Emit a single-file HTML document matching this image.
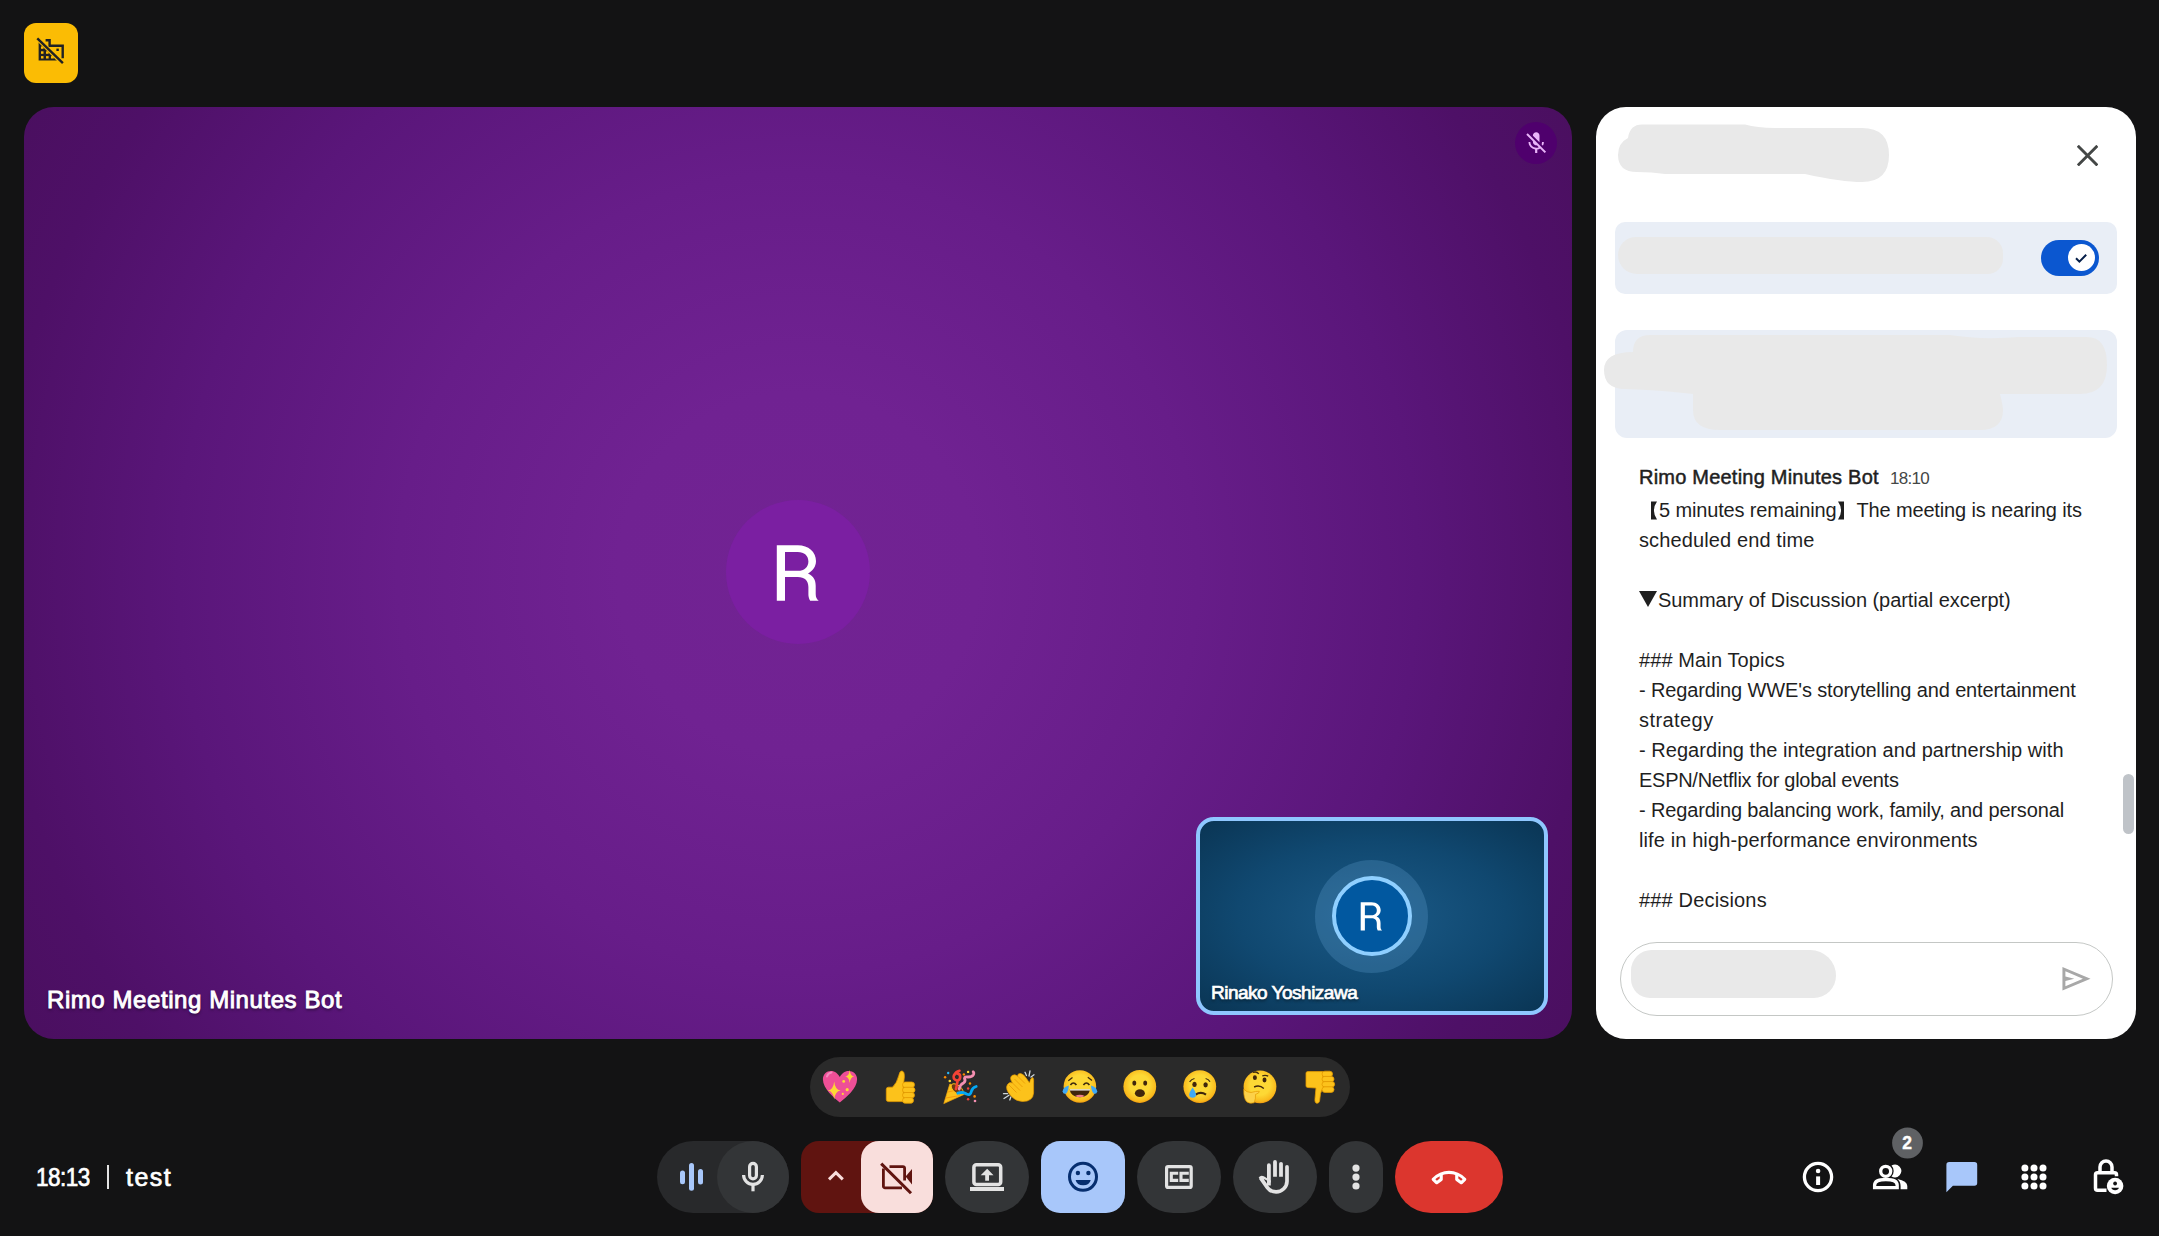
<!DOCTYPE html>
<html><head><meta charset="utf-8">
<style>
*{margin:0;padding:0;box-sizing:border-box}
html,body{width:2159px;height:1236px;overflow:hidden;background:#131314;font-family:"Liberation Sans",sans-serif}
.abs{position:absolute}
#badge{left:24px;top:23px;width:54px;height:60px;border-radius:12px;background:#fbbc04}
#main{left:24px;top:107px;width:1548px;height:932px;border-radius:30px;overflow:hidden;
 background:radial-gradient(circle at 50% 50%,#722393 0px,#702292 180px,#671d89 400px,#5a167a 620px,#4e1067 800px,#4a0f5f 910px)}
#panel{left:1596px;top:107px;width:540px;height:932px;border-radius:30px;background:#fff;overflow:hidden}
.blob{position:absolute;background:#e9e9e9}
.msg{position:absolute;left:43px;color:#1f1f1f;font-size:20px;line-height:30px;white-space:pre}
.br{display:inline-block;vertical-align:-3px}
.tri{display:inline-block;vertical-align:-1px}
.btn{position:absolute;top:1141px;height:72px;border-radius:36px;background:#333537}
</style></head><body>
<div id="badge" class="abs"></div>
<svg class="abs" style="left:0;top:0" width="100" height="100" viewBox="0 0 100 100">
 <path d="M38.6 39.6V60.5H60Z" fill="#202124"/>
 <g fill="#fbbc04"><rect x="41" y="46.4" width="2.5" height="2.4"/><rect x="41" y="51.3" width="2.5" height="2.5"/><rect x="46" y="51.3" width="2.6" height="2.5"/><rect x="41" y="56.1" width="2.5" height="2.4"/><rect x="46" y="56.1" width="2.6" height="2.4"/><rect x="51" y="56.1" width="2.8" height="2.4"/></g>
 <path d="M45.6 40.3H49.6V45.7H62.7V58.2" fill="none" stroke="#202124" stroke-width="2.4"/>
 <rect x="56.4" y="48.6" width="2.4" height="2.4" fill="#202124"/>
 <path d="M36.4 37.4L63.1 64.1" stroke="#fbbc04" stroke-width="4.2"/>
 <path d="M37.3 38.3L62.9 63.2" stroke="#202124" stroke-width="2.4"/>
</svg>
<div id="main" class="abs">
  <div class="abs" style="left:1491px;top:15px;width:42px;height:42px;border-radius:50%;background:#4f006d"></div>
  <svg class="abs" style="left:1499.2px;top:22.8px" width="26.4" height="26.4" viewBox="0 0 24 24"><path fill="#e9b5f9" d="M19 11h-1.7c0 .74-.16 1.43-.43 2.05l1.23 1.23c.56-.98.9-2.09.9-3.28zm-4.02.17c0-.06.02-.11.02-.17V5c0-1.66-1.34-3-3-3S9 3.34 9 5v.18l5.98 5.99zM4.27 3L3 4.27l6.01 6.01V11c0 1.66 1.33 3 2.99 3 .22 0 .44-.03.65-.08l1.66 1.66c-.71.33-1.5.52-2.31.52-2.76 0-5.3-2.1-5.3-5.1H5c0 3.41 2.72 6.23 6 6.72V21h2v-3.28c.91-.13 1.77-.45 2.54-.9L19.73 21 21 19.730 4.27 3z"/></svg>
  <div class="abs" style="left:702px;top:393px;width:144px;height:144px;border-radius:50%;background:#7b1fa2;color:#fff;font-size:81px;text-align:center;line-height:144px"></div>
  <div class="abs" style="left:23px;top:879px;color:#fff;font-size:24px;line-height:28px;-webkit-text-stroke:0.9px #fff;letter-spacing:0.57px;text-shadow:0 1.5px 3px rgba(0,0,0,.5)">Rimo Meeting Minutes Bot</div>
  <div class="abs" style="left:1172px;top:710px;width:352px;height:198px;border-radius:18px;border:4px solid #8fc7ff;background:radial-gradient(ellipse at 50% 50%,#1b5a87 0%,#104870 55%,#0a3554 100%)"></div>
  <div class="abs" style="left:1291.3px;top:752.5px;width:113px;height:113px;border-radius:50%;background:rgba(120,180,230,.22)"></div>
  <div class="abs" style="left:1307.8px;top:768.8px;width:80.5px;height:80.5px;border-radius:50%;background:#0158a0;border:4px solid #8fcfff;color:#fff;font-size:41px;line-height:72.5px;text-align:center"></div>
  <div class="abs" style="left:1187px;top:874px;color:#fff;font-size:19px;line-height:24px;-webkit-text-stroke:0.7px #fff;letter-spacing:-0.5px;text-shadow:0 1.5px 3px rgba(0,0,0,.5)">Rinako Yoshizawa</div>
</div>
<svg class="abs" style="left:0;top:0" width="1600" height="1050" viewBox="0 0 1600 1050">
 <path transform="translate(776.8 545.3)" fill="#fff" fill-rule="evenodd" d="M0 0H21C31.7 0 39.2 6.7 39.2 15.8C39.2 21.7 35.7 26 31.2 28.2C36.7 30.7 38.9 34.7 38.9 40.7V48.7C38.9 51.7 39.9 54.2 41.9 55.5H33.4C32.1 53.4 31.6 51.2 31.6 49.2V41.7C31.6 35.2 27.7 31.6 21 31.6H8.2V55.5H0ZM8.2 6.7V25.5H21C27.5 25.5 31.6 21.7 31.6 16.1C31.6 10.5 27.5 6.7 21 6.7Z"/>
 <path transform="translate(1360.7 902.2) scale(0.51)" fill="#fff" fill-rule="evenodd" d="M0 0H21C31.7 0 39.2 6.7 39.2 15.8C39.2 21.7 35.7 26 31.2 28.2C36.7 30.7 38.9 34.7 38.9 40.7V48.7C38.9 51.7 39.9 54.2 41.9 55.5H33.4C32.1 53.4 31.6 51.2 31.6 49.2V41.7C31.6 35.2 27.7 31.6 21 31.6H8.2V55.5H0ZM8.2 6.7V25.5H21C27.5 25.5 31.6 21.7 31.6 16.1C31.6 10.5 27.5 6.7 21 6.7Z"/>
</svg>
<div id="panel" class="abs">
  <svg class="abs" style="left:0;top:0" width="540" height="340" viewBox="1596 107 540 340"><g fill="#e9e9e9"><path d="M1642 124.6H1745Q1757 128 1775 128H1862Q1889 128 1889 155Q1889 182 1862 182Q1842 182 1805 174H1665Q1652 172 1637 172Q1618 172 1618 155Q1618 143 1628 138Q1630 124.6 1642 124.6Z"/></g></svg>
  <svg class="abs" style="left:480.5px;top:38.3px" width="21.2" height="21.2" viewBox="0 0 21.2 21.2"><path d="M0.8 0.8L20.4 20.4M20.4 0.8L0.8 20.4" stroke="#444746" stroke-width="2.9" fill="none"/></svg>
  <div class="abs" style="left:19px;top:115px;width:502px;height:72px;border-radius:10px;background:#e9eef6"></div>
  <div class="blob" style="left:22px;top:129.5px;width:385px;height:37px;border-radius:19px 17px 16px 20px"></div>
  <div class="abs" style="left:445px;top:133px;width:58px;height:36px;border-radius:18px;background:#0b57d0"></div>
  <div class="abs" style="left:471.5px;top:137px;width:27px;height:27px;border-radius:50%;background:#fff"></div>
  <svg class="abs" style="left:475px;top:140.5px" width="20" height="20" viewBox="0 0 20 20"><path d="M5 10.2L8.4 13.6L15.2 6.8" fill="none" stroke="#041e49" stroke-width="2"/></svg>
  <div class="abs" style="left:19px;top:223px;width:502px;height:108px;border-radius:12px;background:#e9eef6"></div>
  <svg class="abs" style="left:0;top:0" width="540" height="340" viewBox="1596 107 540 340"><g fill="#e9e9e9"><path d="M1650 335H1950Q1980 340 2020 337H2087Q2107 337 2107 365Q2107 394 2080 394H2000Q2003 406 2003 410Q2003 430 1980 430H1720Q1693 430 1693 410V394Q1660 390 1625 389Q1604 389 1604 370Q1604 352 1633 352Q1633 335 1650 335Z"/></g></svg>
  <div class="msg" style="top:355px;letter-spacing:0.217px"><span style="-webkit-text-stroke:0.5px #1f1f1f">Rimo Meeting Minutes Bot</span></div>
  <div class="msg" style="top:357px;left:294px;font-size:17px;color:#444746;letter-spacing:-0.7px">18:10</div>
  <div class="msg" style="top:388px;letter-spacing:-0.141px"><svg class="br" width="20" height="19" viewBox="0 0 20 19"><path d="M12 0.5H18Q14.8 5 15 9.5Q14.8 14 18 18.5H12Z" fill="#1f1f1f"/></svg>5 minutes remaining<svg class="br" width="20" height="19" viewBox="0 0 20 19"><path d="M8 0.5H2Q5.2 5 5 9.5Q5.2 14 2 18.5H8Z" fill="#1f1f1f"/></svg>The meeting is nearing its</div>
  <div class="msg" style="top:418px;letter-spacing:0.118px">scheduled end time</div>
  <div class="msg" style="top:478px;letter-spacing:-0.051px"><svg class="tri" width="19" height="17" viewBox="0 0 19 17"><path d="M0 0H18L9 16Z" fill="#1f1f1f"/></svg>Summary of Discussion (partial excerpt)</div>
  <div class="msg" style="top:538px;letter-spacing:0.107px">### Main Topics</div>
  <div class="msg" style="top:568px;letter-spacing:-0.128px">- Regarding WWE's storytelling and entertainment</div>
  <div class="msg" style="top:598px;letter-spacing:0.429px">strategy</div>
  <div class="msg" style="top:628px;letter-spacing:0.043px">- Regarding the integration and partnership with</div>
  <div class="msg" style="top:658px;letter-spacing:-0.276px">ESPN/Netflix for global events</div>
  <div class="msg" style="top:688px;letter-spacing:-0.149px">- Regarding balancing work, family, and personal</div>
  <div class="msg" style="top:718px;letter-spacing:0.111px">life in high-performance environments</div>
  <div class="msg" style="top:778px;letter-spacing:0.167px">### Decisions</div>
  <div class="abs" style="left:24px;top:835px;width:493px;height:74px;border-radius:37px;border:1.5px solid #c4c7c5"></div>
  <div class="abs" style="left:527px;top:667px;width:11px;height:60px;border-radius:6px;background:#bfc3c8"></div>
  <div class="blob" style="left:35px;top:843px;width:205px;height:48px;border-radius:24px 30px 26px 22px"></div>
  <svg class="abs" style="left:462px;top:854.1px" width="35.5" height="35.5" viewBox="0 0 24 24"><path fill-rule="evenodd" fill="#a8a8a8" d="M3 20V4l19 8Zm2-3 11.85-5L5 7v3.5l6 1.5-6 1.5Z"/></svg>
</div>
<div class="abs" style="left:810px;top:1057px;width:540px;height:60px;border-radius:30px;background:#2a2a2a"></div>
<!-- bottom bar -->
<div class="abs" style="left:657px;top:1141px;width:132px;height:72px;border-radius:36px;background:#28292b"></div>
<div class="abs" style="left:717px;top:1141px;width:72px;height:72px;border-radius:36px;background:#333537"></div>
<svg class="abs" style="left:0;top:0" width="2159" height="1236" viewBox="0 0 2159 1236">
 <g fill="#a8c7fa"><rect x="680" y="1170.4" width="5" height="13.8" rx="2.5"/><rect x="689" y="1163" width="5" height="27.7" rx="2.5"/><rect x="698" y="1169" width="5" height="15.6" rx="2.5"/></g>
 <g fill="none" stroke="#e3e3e3" stroke-width="3.2"><rect x="749.6" y="1163.3" width="6.8" height="15.6" rx="3.4"/><path d="M743.6 1175a9.4 9.4 0 0 0 18.8 0"/><path d="M753 1184.5V1191.3"/></g>
</svg>
<div class="abs" style="left:801px;top:1141px;width:132px;height:72px;border-radius:18px;background:#601410"></div>
<div class="abs" style="left:861px;top:1141px;width:72px;height:72px;border-radius:18px;background:#f9dedc"></div>
<div class="abs" style="left:945px;top:1141px;width:84px;height:72px;border-radius:36px;background:#333537"></div>
<div class="abs" style="left:1041px;top:1141px;width:84px;height:72px;border-radius:19px;background:#a8c7fa"></div>
<div class="abs" style="left:1137px;top:1141px;width:84px;height:72px;border-radius:36px;background:#333537"></div>
<div class="abs" style="left:1233px;top:1141px;width:84px;height:72px;border-radius:36px;background:#333537"></div>
<div class="abs" style="left:1329px;top:1141px;width:54px;height:72px;border-radius:27px;background:#333537"></div>
<div class="abs" style="left:1395px;top:1141px;width:108px;height:72px;border-radius:36px;background:#dc362e"></div>
<svg class="abs" style="left:0;top:0" width="2159" height="1236" viewBox="0 0 2159 1236">
 <path d="M829 1179.3L835.9 1172.6L842.8 1179.3" fill="none" stroke="#f9dedc" stroke-width="3"/>
 <g fill="none" stroke="#601410" stroke-width="2.8">
  <path d="M883.4 1168.5V1186.2a1.6 1.6 0 0 0 1.6 1.6H902"/>
  <path d="M889.5 1166.6H903a1.6 1.6 0 0 1 1.6 1.6V1180.5"/>
  <path d="M881.2 1163.6L911 1193.2" stroke-width="3"/>
 </g>
 <path d="M905.6 1176.6L912 1169V1184.5Z" fill="#601410"/>
 <g fill="none" stroke="#e3e3e3">
  <rect x="973.9" y="1164.8" width="26.8" height="19.6" rx="2.5" stroke-width="3.5"/>
 </g>
 <rect x="970" y="1187" width="34" height="4" fill="#e3e3e3"/>
 <path d="M987.2 1168.8L980.7 1175.2H985.2V1180.8H989V1175.2H993.5Z" fill="#e3e3e3"/>
 <g fill="none" stroke="#062e6f" stroke-width="3"><circle cx="1083" cy="1176.8" r="13.5"/></g>
 <g fill="#062e6f"><circle cx="1077.9" cy="1173" r="2.2"/><circle cx="1088.4" cy="1173" r="2.2"/><path d="M1075.6 1180H1090.7Q1089.5 1185.3 1083.15 1185.3Q1076.8 1185.3 1075.6 1180Z"/></g>
 <g fill="none" stroke="#e3e3e3" stroke-width="3.2"><rect x="1166.6" y="1166.6" width="24.6" height="20.8" rx="1.5"/></g>
 <g fill="none" stroke="#e3e3e3" stroke-width="3.1"><path d="M1178.2 1173.3H1171.3V1180.4H1178.2"/><path d="M1188.8 1173.3H1181V1180.4H1188.8"/></g>
 <g fill="#e3e3e3">
  <path d="M1267 1185.5V1165.2a1.9 1.9 0 0 1 3.8 0V1185.5Z"/>
  <path d="M1273.1 1176.7V1162a1.9 1.9 0 0 1 3.8 0V1176.7Z"/>
  <path d="M1279.1 1176.7V1163.8a1.9 1.9 0 0 1 3.8 0V1176.7Z"/>
  <path d="M1258.6 1177.4Q1260.8 1174.8 1263.8 1176.2L1270.8 1180.4V1182.8L1264.5 1179.2L1262.6 1180.6Z"/>
 </g>
 <path d="M1287 1167V1181.2A10.9 10.9 0 0 1 1276.1 1191.9Q1270.5 1191.9 1267.4 1187.6L1260.4 1177.6" fill="none" stroke="#e3e3e3" stroke-width="3.7" stroke-linejoin="round"/>
 <path d="M1285.1 1167a1.9 1.9 0 0 1 3.8 0Z" fill="#e3e3e3"/>
 <g fill="#e3e3e3"><circle cx="1356" cy="1168.1" r="3.6"/><circle cx="1356" cy="1177.1" r="3.6"/><circle cx="1356" cy="1186" r="3.6"/></g>
 <path transform="translate(1430.4 1195.66) scale(0.03873)" fill="#fff" d="m136-304-92-90q-12-12-12-29t12-29q88-95 203-142.5T480-642q118 0 232.5 47.5T916-452q12 12 12 29t-12 29l-92 90q-11 11-25.5 12t-26.5-8l-116-88q-8-6-12-14t-4-18v-114q-38-12-78-19t-82-7q-42 0-82 7t-78 19v114q0 10-4 18t-12 14l-116 88q-12 9-26.5 8T136-304Zm104-198q-29 15-56 34.5T128-424l40 40 72-56v-62Zm480 2v60l72 56 40-38q-29-26-56-45.5T720-500Z"/>
 <!-- right icons -->
 <g fill="none" stroke="#fff" stroke-width="3.3"><circle cx="1818" cy="1177" r="13.6"/></g>
 <circle cx="1818.1" cy="1171" r="2.3" fill="#fff"/><rect x="1816.1" y="1176.4" width="4" height="8.6" fill="#fff"/>
 <circle cx="1907.5" cy="1143" r="15.4" fill="#5f6164"/>
 <text x="1907.2" y="1149.3" fill="#fff" font-family="Liberation Sans" font-weight="bold" font-size="17.5" text-anchor="middle" stroke="#fff" stroke-width="0.4">2</text>
 <g fill="none" stroke="#fff" stroke-width="3.3">
  <circle cx="1885.7" cy="1171.3" r="5"/>
  <path d="M1874.6 1187.7V1185.2Q1874.6 1179.5 1885.9 1179.5Q1897.2 1179.5 1897.2 1185.2V1187.7Z"/>
 </g>
 <path d="M1891.5 1165.5A6.4 6.4 0 1 1 1891.5 1176.5A8 8 0 0 0 1891.5 1165.5Z" fill="#fff"/>
 <path d="M1897.4 1178.9Q1907.3 1180.8 1907.3 1186V1189.3H1900.6V1186Q1900.6 1181.5 1897.4 1178.9Z" fill="#fff"/>
 <path d="M1946.4 1164.9a2.8 2.8 0 0 1 2.8 -2.8H1974.4a2.8 2.8 0 0 1 2.8 2.8V1183a2.8 2.8 0 0 1 -2.8 2.8H1952.9L1946.4 1192.3Z" fill="#a8c7fa"/>
 <g fill="#fff">
  <circle cx="2024.9" cy="1167.9" r="3.5"/><circle cx="2034" cy="1167.9" r="3.5"/><circle cx="2043" cy="1167.9" r="3.5"/>
  <circle cx="2024.9" cy="1176.9" r="3.5"/><circle cx="2034" cy="1176.9" r="3.5"/><circle cx="2043" cy="1176.9" r="3.5"/>
  <circle cx="2024.9" cy="1186" r="3.5"/><circle cx="2034" cy="1186" r="3.5"/><circle cx="2043" cy="1186" r="3.5"/>
 </g>
 <g fill="none" stroke="#fff" stroke-width="3.5">
  <path d="M2100 1171.5V1167a6 6 0 0 1 12 0V1171.5"/>
  <path d="M2106.5 1190.2H2097.5a2 2 0 0 1 -2 -2V1174.7a2 2 0 0 1 2 -2H2114.5a2 2 0 0 1 2 2V1176.3"/>
 </g>
 <circle cx="2115.1" cy="1186" r="8.3" fill="#fff"/>
 <circle cx="2115.1" cy="1183.5" r="1.9" fill="#131314"/>
 <path d="M2111.3 1187.8H2118.9Q2118.3 1190.2 2115.1 1190.2Q2111.9 1190.2 2111.3 1187.8Z" fill="#131314"/>
</svg>
<svg class="abs" style="left:0;top:0" width="2159" height="1236" viewBox="0 0 2159 1236">
 <defs>
  <radialGradient id="fg" cx="0.5" cy="0.45" r="0.55"><stop offset="0.55" stop-color="#fdd835"/><stop offset="0.9" stop-color="#f9b91c"/><stop offset="1" stop-color="#f19b10"/></radialGradient>
  <radialGradient id="hg" cx="0.5" cy="0.5" r="0.6"><stop offset="0.6" stop-color="#fcc52a"/><stop offset="1" stop-color="#f2a516"/></radialGradient>
 </defs>
 <!-- sparkling heart -->
 <path d="M839.8 1102.4C834 1097.5 822.9 1089 822.9 1079.2C822.9 1074.2 826.5 1070.9 831 1070.9C835 1070.9 838 1073.5 839.8 1077C841.6 1073.5 844.6 1070.9 848.6 1070.9C853.4 1070.9 857.1 1074.2 857.1 1079.2C857.1 1089 845.6 1097.5 839.8 1102.4Z" fill="#ee4f97"/>
 <path d="M827 1076.5Q828 1073 831.5 1072.5" stroke="#f48bbf" stroke-width="2" fill="none" stroke-linecap="round"/>
 <g fill="#fdd835">
  <path d="M834.2 1081.4Q835 1089.6 840.6 1090.4Q835 1091.2 834.2 1099.4Q833.4 1091.2 827.8 1090.4Q833.4 1089.6 834.2 1081.4Z"/>
  <path d="M849.7 1070Q850.3 1076 854.2 1076.5Q850.3 1077 849.7 1083Q849.1 1077 845.2 1076.5Q849.1 1076 849.7 1070Z"/>
  <circle cx="843.7" cy="1081.4" r="1.4"/><circle cx="847.2" cy="1089.7" r="1.6"/><circle cx="842.8" cy="1093.9" r="1.1"/>
 </g>
 <!-- thumbs up -->
 <path d="M886.3 1089.3Q886.3 1087.2 888.5 1087.2H892.5Q897 1083 898.8 1075.5Q899.6 1071 901.8 1071Q904.6 1071.2 904.3 1077Q904 1081.5 903.2 1085.5L903.6 1101.6H888.5Q886.3 1101.6 886.3 1099.5Z" fill="#fcc21b" stroke="#e59b00" stroke-width="0.8"/>
 <g fill="#fcc21b" stroke="#e59b00" stroke-width="0.8">
  <rect x="902.5" y="1082" width="12" height="5.6" rx="2.8"/>
  <rect x="902.5" y="1087.3" width="12.5" height="5.4" rx="2.7"/>
  <rect x="902.5" y="1092.5" width="12" height="5.4" rx="2.7"/>
  <rect x="902.5" y="1097.6" width="11" height="5.6" rx="2.8"/>
 </g>
 <!-- party popper -->
 <path d="M943.8 1103.6L949.8 1084Q957.5 1085 964.5 1094.2Z" fill="#fcc21b" stroke="#f0a30a" stroke-width="0.7"/>
 <path d="M946 1098L960 1095.5M948 1092L956.5 1090" stroke="#f79a0a" stroke-width="1" fill="none"/>
 <ellipse cx="957.2" cy="1089.2" rx="7.2" ry="3.8" transform="rotate(40 957.2 1089.2)" fill="#6d3a12" stroke="#fcc21b" stroke-width="0.9"/>
 <path d="M956 1089Q957.2 1084 957.6 1080.5Q953.5 1080 953.6 1076.6Q953.8 1073.2 957 1073.4Q960.4 1073.8 960.2 1077.2Q960 1080 957.6 1080.5M954.5 1075Q955.5 1071.5 959.5 1070.8" stroke="#f44336" stroke-width="2.6" fill="none" stroke-linecap="round"/>
 <path d="M959.2 1089Q960 1084.5 963.5 1083Q966 1081 964.5 1078.5Q964.5 1076.5 968 1077Q972.5 1077 973.5 1074.5Q974.2 1072.5 973.2 1071.8" stroke="#f48fb1" stroke-width="2.8" fill="none" stroke-linecap="round"/>
 <path d="M957.8 1093.2Q963 1091.5 966.5 1094Q970.5 1096 971.5 1091Q972.5 1087.5 976.2 1086.5" stroke="#03a9f4" stroke-width="2.8" fill="none" stroke-linecap="round"/>
 <g><circle cx="948.2" cy="1073" r="1.2" fill="#29b6f6"/><circle cx="945.1" cy="1077.2" r="1.2" fill="#fb8c00"/><circle cx="949.8" cy="1081" r="1.3" fill="#fdd835"/><circle cx="963.9" cy="1074.4" r="1.2" fill="#fb8c00"/><circle cx="968.1" cy="1071.9" r="1.2" fill="#fdd835"/><circle cx="970" cy="1083.5" r="1.2" fill="#fb8c00"/><circle cx="968.1" cy="1088.5" r="1.2" fill="#f44336"/><circle cx="974.6" cy="1096.4" r="1.3" fill="#fb8c00"/><circle cx="968.1" cy="1099.2" r="1.2" fill="#f44336"/><circle cx="975" cy="1101" r="1.3" fill="#f48fb1"/></g>
 <!-- clap -->
 <path d="M1011.5 1096.5Q1004.5 1089 1007.5 1084.5Q1009.5 1081.5 1012.5 1083Q1009 1078 1012 1075.5Q1015 1073.5 1018 1076.5Q1017 1073.5 1020.5 1073.5Q1023.5 1073.8 1026.5 1078.5L1029.5 1083Q1030.5 1077.5 1032.8 1077.5Q1034 1078.5 1033.6 1083V1093Q1033 1101.5 1022.5 1101.5Q1016 1101.5 1011.5 1096.5Z" fill="#fcc21b" stroke="#e59b00" stroke-width="0.7"/>
 <path d="M1009 1085L1016.5 1092.5M1012.5 1083L1020 1090.5M1014.5 1079L1022.5 1087M1018 1076.5L1025 1083.5" stroke="#e08a00" stroke-width="0.6" fill="none"/>
 <path d="M1025 1072.3L1026.5 1075.5M1030 1071L1029 1076M1034 1074.8L1031 1077M1003.5 1093.7H1007.5M1004 1098.5L1009 1095.3M1009.8 1100L1010.8 1097" stroke="#cfd8dc" stroke-width="1.3" fill="none" stroke-linecap="round"/>
 <!-- joy -->
 <circle cx="1079.9" cy="1086.5" r="16.3" fill="url(#fg)"/>
 <path d="M1068.3 1080.8L1072.5 1077.6M1087.8 1077.3L1092 1080.6" stroke="#3e2a0e" stroke-width="1.3" fill="none"/>
 <path d="M1070.4 1085Q1073.4 1081 1076.4 1085M1083.4 1085Q1086.4 1081 1089.4 1085" stroke="#3e2a0e" stroke-width="1.6" fill="none"/>
 <path d="M1069.5 1089.5H1090.1Q1088.5 1097.2 1079.9 1097.2Q1071.2 1097.2 1069.5 1089.5Z" fill="#40260c"/>
 <path d="M1075 1096Q1079.9 1093.5 1084.8 1096Q1082.5 1097.2 1079.9 1097.2Q1077.3 1097.2 1075 1096Z" fill="#ec7d8a"/>
 <path d="M1069.8 1089.9H1090" stroke="#fff" stroke-width="1.2"/>
 <path d="M1068.9 1085.4Q1063 1087 1062.6 1091.3Q1063 1094.5 1065.8 1093.7Q1068 1092.5 1068.9 1085.4Z" fill="#3fa9f5"/>
 <path d="M1090.9 1085.4Q1096.8 1087 1097.2 1091.3Q1096.8 1094.5 1094 1093.7Q1091.8 1092.5 1090.9 1085.4Z" fill="#3fa9f5"/>
 <!-- wow -->
 <circle cx="1139.8" cy="1086.5" r="16.4" fill="url(#fg)"/>
 <g fill="#40260c"><ellipse cx="1134.3" cy="1083.1" rx="2" ry="2.6"/><ellipse cx="1145.2" cy="1083.1" rx="2" ry="2.6"/><ellipse cx="1139.9" cy="1093.2" rx="5" ry="3.9"/></g>
 <!-- cry -->
 <circle cx="1199.8" cy="1086.6" r="16.4" fill="url(#fg)"/>
 <path d="M1189.6 1081.8Q1191.5 1079 1194.5 1078.5M1205.6 1078.5Q1208.5 1079 1210 1081.8" stroke="#3e2a0e" stroke-width="1.2" fill="none"/>
 <g fill="#40260c"><ellipse cx="1194.5" cy="1084.4" rx="2.2" ry="2.6"/><ellipse cx="1205.6" cy="1084.8" rx="2.2" ry="2.6"/></g>
 <path d="M1195.6 1094.6Q1200.8 1091.2 1206 1094.6" stroke="#40260c" stroke-width="2.3" fill="none"/>
 <path d="M1192.6 1087.4Q1196 1092.5 1196 1094.5Q1196 1097.8 1192.6 1097.8Q1189.2 1097.8 1189.2 1094.5Q1189.2 1092.5 1192.6 1087.4Z" fill="#3fa9f5"/>
 <!-- think -->
 <circle cx="1260" cy="1086.8" r="16.4" fill="url(#fg)"/>
 <path d="M1253 1072.5Q1256.5 1071 1258.8 1073.8M1262.3 1075.9Q1265.5 1074.8 1268.2 1076.2" stroke="#3e2a0e" stroke-width="1.3" fill="none"/>
 <g fill="#40260c"><ellipse cx="1254.9" cy="1077.7" rx="2" ry="2.4"/><ellipse cx="1264.5" cy="1080" rx="2" ry="2.4"/></g>
 <path d="M1254.1 1087Q1259.5 1084.5 1263.8 1088.5" stroke="#40260c" stroke-width="1.4" fill="none"/>
 <path d="M1243.8 1089.2Q1246.5 1092.5 1251 1092.5Q1256 1091 1259.3 1091.3Q1259.8 1093 1255.5 1094.5Q1256 1098.5 1254.1 1102.8Q1250 1104 1247 1102Q1243.5 1099 1243.8 1089.2Z" fill="#fcd149" stroke="#e59b00" stroke-width="0.7"/>
 <!-- thumbs down -->
 <path d="M1306 1073.3Q1306 1071.6 1307.7 1071.6H1322.7L1323.5 1087.8Q1321.5 1090 1320.5 1093.5L1319.5 1101.3Q1318.8 1103.3 1317 1103.3Q1314.5 1103 1315 1098.5Q1315.5 1093 1316 1088L1307.7 1087.5Q1306 1087.5 1306 1085.8Z" fill="#fcc21b" stroke="#e59b00" stroke-width="0.8"/>
 <g fill="#fcc21b" stroke="#e59b00" stroke-width="0.8">
  <rect x="1322" y="1071.2" width="10.5" height="5.6" rx="2.8"/>
  <rect x="1322" y="1076.4" width="12" height="5.4" rx="2.7"/>
  <rect x="1322" y="1081.6" width="12.6" height="5.4" rx="2.7"/>
  <rect x="1322" y="1086.8" width="12" height="5.6" rx="2.8"/>
 </g>
</svg>
<div class="abs" style="left:36px;top:1162px;color:#fff;font-size:25px;line-height:30px;-webkit-text-stroke:0.7px #fff;letter-spacing:-0.6px;transform:scaleX(0.9);transform-origin:0 0">18:13</div>
<div class="abs" style="left:107px;top:1165px;width:1.5px;height:24px;background:#e3e3e3"></div>
<div class="abs" style="left:126px;top:1162px;color:#fff;font-size:25px;line-height:30px;-webkit-text-stroke:0.7px #fff;letter-spacing:1.5px">test</div>
</body></html>
